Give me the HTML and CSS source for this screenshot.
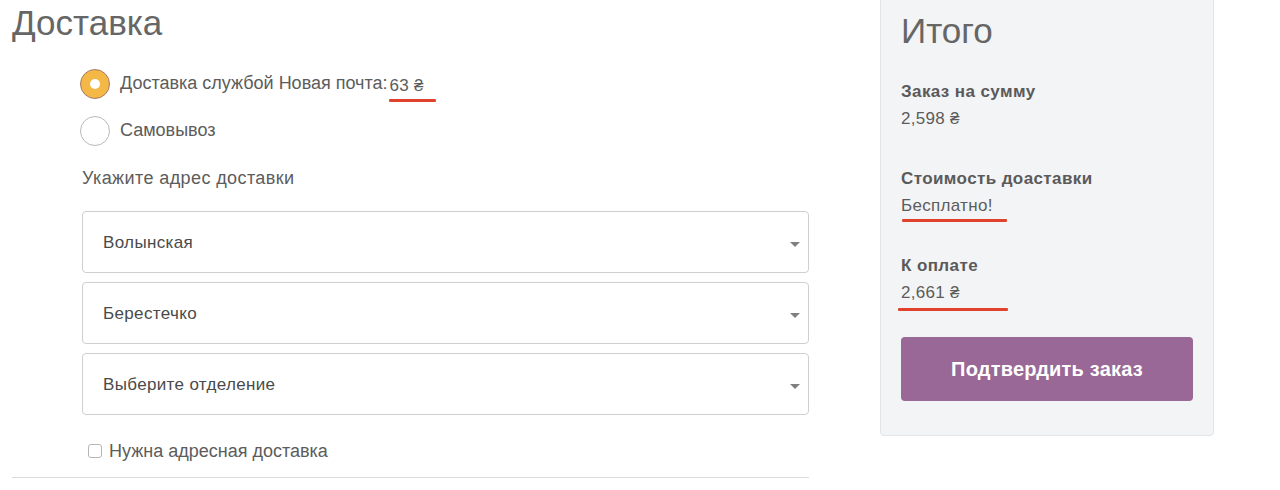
FILE: index.html
```html
<!DOCTYPE html>
<html lang="ru">
<head>
<meta charset="utf-8">
<link rel="stylesheet" href="styles.css">
</head>
<body>
<div class="page">
  <section class="shipping">
    <h1 class="title">Доставка</h1>
    <div class="methods">
      <label class="method">
        <span class="radio radio-on"></span>
        <span class="method-text">Доставка службой Новая почта:<span class="price mark mark-price">63 ₴</span></span>
      </label>
      <label class="method">
        <span class="radio"></span>
        <span class="method-text">Самовывоз</span>
      </label>
    </div>
    <p class="hint">Укажите адрес доставки</p>
    <div class="selects">
      <div class="select"><span>Волынская</span><span class="arrow"></span></div>
      <div class="select"><span>Берестечко</span><span class="arrow"></span></div>
      <div class="select"><span>Выберите отделение</span><span class="arrow"></span></div>
    </div>
    <label class="check-row"><span class="checkbox"></span><span>Нужна адресная доставка</span></label>
    <div class="rule"></div>
  </section>
  <aside class="summary">
    <h2 class="summary-title">Итого</h2>
    <div class="group">
      <div class="label">Заказ на сумму</div>
      <div class="value">2,598 ₴</div>
    </div>
    <div class="group">
      <div class="label">Стоимость доаставки</div>
      <div class="value"><span class="mark mark-free">Бесплатно!</span></div>
    </div>
    <div class="group">
      <div class="label">К оплате</div>
      <div class="value"><span class="mark mark-total">2,661 ₴</span></div>
    </div>
    <button class="confirm">Подтвердить заказ</button>
  </aside>
</div>
</body>
</html>
```

FILE: styles.css
```css
* { box-sizing: border-box; }
html, body { margin: 0; padding: 0; background: #fff; }
body {
  font-family: "Liberation Sans", Arial, sans-serif;
  color: #5c5c5c;
  width: 1280px;
  height: 490px;
  overflow: hidden;
}
.page {
  display: flex;
  align-items: flex-start;
  padding-left: 12px;
}
.shipping {
  width: 797px;
  display: flex;
  flex-direction: column;
}
.title {
  margin: 3px 0 0 0;
  font-size: 35px;
  line-height: 40px;
  font-weight: normal;
  color: #666;
}
.methods {
  display: flex;
  flex-direction: column;
  gap: 17px;
  margin-top: 26px;
  padding-left: 68px;
}
.method {
  display: flex;
  align-items: center;
  gap: 10px;
  height: 30px;
  font-size: 18px;
}
.method-text { margin-top: -1px; }
.radio {
  width: 30px;
  height: 30px;
  border-radius: 50%;
  border: 1px solid #b9b9b9;
  background: #fff;
  flex: none;
  position: relative;
}
.radio-on {
  background: #f4b847;
  border: 1.5px solid #a87a6a;
}
.radio-on::after {
  content: "";
  position: absolute;
  left: 50%;
  top: 50%;
  width: 10px;
  height: 10px;
  margin: -5px 0 0 -5px;
  border-radius: 50%;
  background: #fff;
}
.price {
  display: inline-block;
  margin-left: 2px;
  position: relative;
  top: 2px;
  font-size: 17px;
  letter-spacing: 0.3px;
}
.mark { position: relative; }
.mark::after {
  content: "";
  position: absolute;
  height: 3px;
  background: #e0422c;
  border-radius: 1px;
}
.mark-price::after { left: -1px; width: 47px; bottom: -6px; }
.mark-free::after { left: 1px; width: 105px; bottom: -7px; }
.mark-total::after { left: -3px; width: 110px; bottom: -9px; }
.hint {
  margin: 22px 0 0 70px;
  font-size: 18px;
  letter-spacing: 0.4px;
  line-height: 20px;
}
.selects {
  margin: 23px 0 0 70px;
  display: flex;
  flex-direction: column;
  gap: 9px;
}
.select {
  height: 62px;
  border: 1px solid #cfcfcf;
  border-radius: 4px;
  display: flex;
  align-items: center;
  justify-content: space-between;
  padding: 0 8px 0 20px;
  font-size: 17px;
  letter-spacing: 0.35px;
  color: #4a4a4a;
  background: #fff;
}
.select span:first-child { margin-top: 2px; }
.arrow {
  width: 0;
  height: 0;
  border-left: 5px solid transparent;
  border-right: 5px solid transparent;
  border-top: 5px solid #808080;
  margin-top: 4px;
}
.check-row {
  margin: 26px 0 0 76px;
  display: flex;
  align-items: center;
  gap: 7px;
  font-size: 18px;
  line-height: 20px;
}
.checkbox {
  width: 14px;
  height: 14px;
  border: 1px solid #b5b5b5;
  border-radius: 3px;
  background: #fff;
}
.rule {
  margin-top: 16px;
  height: 1px;
  background: #dcdcdc;
}
.summary {
  margin-left: 71px;
  margin-top: -6px;
  width: 334px;
  background: #f3f4f6;
  border: 1px solid #e3e4e6;
  border-radius: 4px;
  padding: 0 20px 34px 20px;
  display: flex;
  flex-direction: column;
}
.summary-title {
  margin: 16px 0 0 0;
  font-size: 35px;
  line-height: 40px;
  font-weight: normal;
  color: #666;
}
.group { margin-top: 27px; }
.group + .group { margin-top: 33px; }
.label {
  font-size: 17px;
  font-weight: bold;
  letter-spacing: 0.4px;
  line-height: 27px;
  color: #5a5a5a;
}
.value {
  font-size: 17px;
  letter-spacing: 0.3px;
  line-height: 27px;
}
.confirm {
  margin-top: 31px;
  height: 64px;
  width: 100%;
  border: none;
  border-radius: 4px;
  background: #9a6896;
  color: #fff;
  font-family: "Liberation Sans", Arial, sans-serif;
  font-size: 20px;
  letter-spacing: 0.2px;
  font-weight: bold;
}
```
